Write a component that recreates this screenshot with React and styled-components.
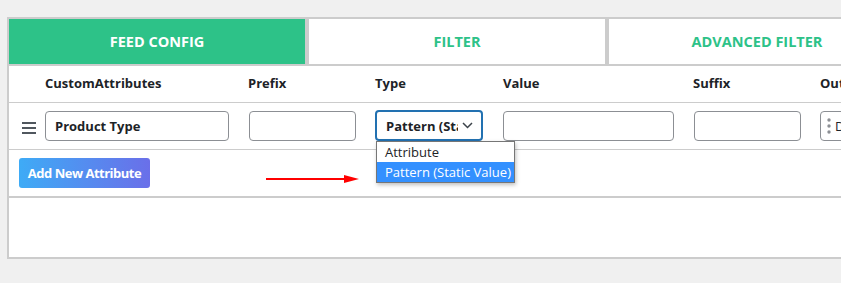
import React from 'react'
import styled, { createGlobalStyle } from 'styled-components'

const Global = createGlobalStyle`
  html, body {
    margin: 0;
    background: #f0f0f0;
    overflow: hidden;
    font-family: "Open Sans", "Noto Sans", sans-serif;
    color: #1d2327;
  }
`

const Page = styled.div`
  padding: 17px 0 0 7px;
`

const Panel = styled.div`
  width: 1100px;
  background: #fff;
  border: 2px solid #ccc;
  border-right: none;
`

const Tabs = styled.div`
  display: flex;
  gap: 4px;
  background: #ccc;
  padding-bottom: 2px;
`

const Tab = styled.div`
  width: 296px;
  height: 45px;
  display: flex;
  align-items: center;
  justify-content: center;
  font-size: 14.5px;
  font-weight: 700;
  background: ${p => (p.$active ? '#2dc288' : '#fff')};
  color: ${p => (p.$active ? '#fff' : '#2dc288')};
`

const Grid = styled.div`
  display: grid;
  grid-template-columns: 36px 204px 126px 128px 191px 126px 1fr;
  align-items: center;
  border-bottom: 1px solid #ccc;
  height: ${p => p.$h}px;
`

const Head = styled.div`
  font-size: 13px;
  font-weight: 700;
  margin-left: ${p => p.$ml || 0}px;
  margin-top: -2px;
  white-space: nowrap;
`

const Cell = styled.div`
  position: relative;
  height: 30px;
`

const Handle = styled.div`
  padding-left: 13px;
  align-self: start;
  padding-top: 14px;
`

const Input = styled.div`
  box-sizing: border-box;
  width: ${p => p.$w}px;
  height: 30px;
  border: 1px solid #8c8f94;
  border-radius: 4px;
  background: #fff;
  padding: 0 9px;
  display: flex;
  align-items: center;
  font-size: 13px;
  font-weight: 700;
  overflow: hidden;
  white-space: nowrap;
`

const Select = styled.div`
  box-sizing: border-box;
  width: 108px;
  height: 31px;
  margin-top: -1px;
  border: 2px solid #2271b1;
  border-radius: 4px;
  display: flex;
  align-items: center;
  padding: 0 8px 0 9px;
  font-size: 13px;
  font-weight: 700;
  gap: 4px;
`

const SelectText = styled.span`
  flex: 1;
  overflow: hidden;
  white-space: nowrap;
`

const Menu = styled.div`
  position: absolute;
  top: 30px;
  left: 1px;
  width: 139px;
  box-sizing: border-box;
  background: #fff;
  border: 1px solid #767676;
  box-shadow: 1px 2px 4px rgba(0, 0, 0, 0.25);
  z-index: 2;
`

const Option = styled.div`
  height: 20px;
  line-height: 20px;
  padding-left: 8px;
  font-size: 13px;
  white-space: nowrap;
  background: ${p => (p.$sel ? '#3390ff' : '#fff')};
  color: ${p => (p.$sel ? '#fff' : '#1d2327')};
`

const Output = styled(Input)`
  width: 120px;
  padding: 0 6px;
  gap: 4px;
  font-weight: 400;
`

const Actions = styled.div`
  position: relative;
  height: 48px;
  border-bottom: 2px solid #ccc;
  padding: 8px 0 0 10px;
  box-sizing: border-box;
`

const AddButton = styled.button`
  height: 30px;
  width: 131px;
  border: none;
  border-radius: 3px;
  background: linear-gradient(90deg, #3eabf6, #6a6fe9);
  color: #fff;
  font-family: inherit;
  font-size: 13px;
  font-weight: 700;
  letter-spacing: -0.5px;
  padding: 0;
`

const Arrow = styled.svg`
  position: absolute;
  left: 257px;
  top: 23px;
`

const Empty = styled.div`
  height: 59px;
`

const Chevron = () => (
  <svg width="11" height="7" viewBox="0 0 11 7">
    <path d="M1 1l4.5 4.5L10 1" fill="none" stroke="#3c434a" strokeWidth="1.5" />
  </svg>
)

const MenuIcon = () => (
  <svg width="14" height="12" viewBox="0 0 14 12">
    <rect x="0" y="0" width="14" height="2" fill="#50575e" />
    <rect x="0" y="5" width="14" height="2" fill="#50575e" />
    <rect x="0" y="10" width="14" height="2" fill="#50575e" />
  </svg>
)

const Dots = () => (
  <svg width="4" height="16" viewBox="0 0 4 16">
    <circle cx="2" cy="2" r="1.7" fill="#8c8f94" />
    <circle cx="2" cy="8" r="1.7" fill="#8c8f94" />
    <circle cx="2" cy="14" r="1.7" fill="#8c8f94" />
  </svg>
)

const App = () => {
  const heads = [
    ['', 0],
    ['CustomAttributes', 0],
    ['Prefix', -1],
    ['Type', 0],
    ['Value', 0],
    ['Suffix', -1],
    ['Output', 0],
  ]
  return (
    <>
      <Global />
      <Page>
        <Panel>
          <Tabs>
            <Tab $active>FEED CONFIG</Tab>
            <Tab>FILTER</Tab>
            <Tab>ADVANCED FILTER</Tab>
          </Tabs>
          <Grid $h={36}>
            {heads.map(([t, ml], i) => (
              <Head key={i} $ml={ml}>{t}</Head>
            ))}
          </Grid>
          <Grid $h={46}>
            <Handle><MenuIcon /></Handle>
            <Cell><Input $w={184}>Product Type</Input></Cell>
            <Cell><Input $w={107} /></Cell>
            <Cell>
              <Select>
                <SelectText>Pattern (Static Value)</SelectText>
                <Chevron />
              </Select>
              <Menu>
                <Option>Attribute</Option>
                <Option $sel>Pattern (Static Value)</Option>
              </Menu>
            </Cell>
            <Cell><Input $w={171} /></Cell>
            <Cell><Input $w={107} /></Cell>
            <Cell>
              <Output><Dots />Default</Output>
            </Cell>
          </Grid>
          <Actions>
            <AddButton>Add New Attribute</AddButton>
            <Arrow width="94" height="12" viewBox="0 0 94 12">
              <line x1="0" y1="6" x2="82" y2="6" stroke="#f00" strokeWidth="2.2" />
              <polygon points="78,2 93,6 78,10" fill="#f00" />
            </Arrow>
          </Actions>
          <Empty />
        </Panel>
      </Page>
    </>
  )
}

export default App
